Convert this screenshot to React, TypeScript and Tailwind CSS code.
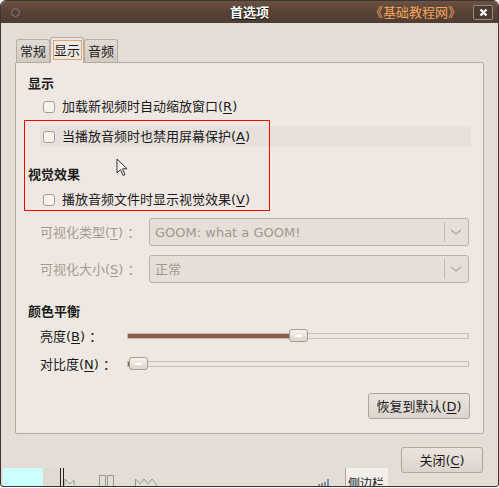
import React from 'react'

const FONT = "font-[family-name:'DejaVu_Sans','Noto_Sans_CJK_SC',sans-serif]"

function Mn({ k }: { k: string }) {
  return (
    <>
      (<span className="underline underline-offset-2">{k}</span>)
    </>
  )
}

function Check({ label, k, hl }: { label: string; k: string; hl?: boolean }) {
  return (
    <div className={`ml-[24px] mr-[12px] flex items-center h-[21px] ${hl ? 'bg-[#e8e1db]' : ''}`}>
      <div className="ml-[3px] w-[12px] h-[12px] rounded-[3px] border border-[#a89d93] bg-[#f7f3ef]"></div>
      <span className="ml-[7px] text-[13px] text-[#1a1a1a] leading-none">
        {label}
        <Mn k={k} />
      </span>
    </div>
  )
}

function Combo({ label, k, value }: { label: string; k: string; value: string }) {
  return (
    <div className="flex items-center h-[28px]">
      <span className="ml-[24px] w-[109px] text-[13px] text-[#a39a91] leading-none whitespace-nowrap">
        {label}
        <Mn k={k} />
        {' ：'}
      </span>
      <div className="w-[320px] h-[28px] rounded-[3px] border border-[#bcb0a4] bg-[#e6dfd8] flex items-center">
        <span className="flex-1 pl-[5px] text-[13px] text-[#a1978e] leading-none">{value}</span>
        <div className="w-px h-[20px] bg-[#c3b8ad]"></div>
        <svg width="22" height="10" viewBox="0 0 22 10" className="mr-[1px]">
          <path d="M6 3 L11 7 L16 3" fill="none" stroke="#b0a59a" strokeWidth="1.2" />
        </svg>
      </div>
    </div>
  )
}

function Slider({ label, k, pos }: { label: string; k: string; pos: number }) {
  return (
    <div className="flex items-center h-[20px]">
      <span className="ml-[24px] w-[87px] text-[13px] text-[#1a1a1a] leading-none whitespace-nowrap">
        {label}
        <Mn k={k} />
        {' ：'}
      </span>
      <div className="relative w-[342px] h-[6px] border border-[#c9beb3] bg-[#ede6df]">
        <div className="h-full bg-[#885e48]" style={{ width: pos }}></div>
        <div
          className="absolute top-[-5px] w-[19px] h-[13px] rounded-[3px] border border-[#a89a8e] bg-gradient-to-b from-[#f6f2ee] to-[#ddd5cd] flex items-center justify-center"
          style={{ left: pos - 2 }}
        >
          <div className="w-[7px] h-[2px] bg-white"></div>
        </div>
      </div>
    </div>
  )
}

export default function App() {
  return (
    <div className={`w-[499px] h-[488px] bg-white overflow-hidden ${FONT}`}>
      <div className="relative w-[499px] h-[487px] rounded-t-[6px] rounded-b-[3px] border border-[#3b3531] bg-[#e4ddd6] flex flex-col overflow-hidden">
        {/* Title bar */}
        <div className="h-[22px] bg-gradient-to-b from-[#6b5244] via-[#574236] to-[#4f3d33] flex items-center relative">
          <div className="ml-[10px] w-[9px] h-[9px] rounded-full border border-[#8a7a70]"></div>
          <div className="absolute left-0 right-0 top-0 h-[22px] flex items-center justify-center">
            <span className="text-[13px] font-bold text-white leading-none [text-shadow:0_1px_1px_#000]">首选项</span>
          </div>
          <span className="ml-auto text-[13px] text-[#f7a55e] leading-none">《基础教程网》</span>
          <div className="ml-[12px] mr-[5px] w-[20px] h-[15px] border border-[#9b887c] rounded-[2px] bg-[#4a3a31] flex items-center justify-center">
            <svg width="9" height="9" viewBox="0 0 9 9">
              <path d="M1.5 1.5 L7.5 7.5 M7.5 1.5 L1.5 7.5" stroke="white" strokeWidth="2.2" />
            </svg>
          </div>
        </div>

        {/* Tabs */}
        <div className="mt-[13px] ml-[15px] flex items-end h-[26px] relative z-10">
          <div className="w-[34px] h-[23px] border border-b-0 border-[#b9ada1] rounded-t-[3px] bg-gradient-to-b from-[#e2dbd4] to-[#d3cac2] flex items-center justify-center text-[13px] leading-none text-[#1a1a1a]">
            常规
          </div>
          <div className="w-[34px] h-[26px] border border-b-0 border-[#b9ada1] rounded-t-[3px] bg-[#efe8e2] flex items-start justify-center pt-[2px] mb-[-1px]">
            <div className="w-[29px] h-[20px] border border-[#e3a46c] flex items-center justify-center text-[13px] leading-none text-[#1a1a1a]">
              显示
            </div>
          </div>
          <div className="w-[34px] h-[23px] border border-b-0 border-[#b9ada1] rounded-t-[3px] bg-gradient-to-b from-[#e2dbd4] to-[#d3cac2] flex items-center justify-center text-[13px] leading-none text-[#1a1a1a]">
            音频
          </div>
        </div>

        {/* Panel */}
        <div className="ml-[14px] w-[469px] h-[372px] border border-[#b5a99d] rounded-[2px] bg-[#efe8e2] flex flex-col">
          <div className="mt-[10px] ml-[12px] h-[20px] flex items-center text-[13px] font-bold leading-none text-[#1a1a1a]">显示</div>
          <div className="mt-[3px]"><Check label="加载新视频时自动缩放窗口" k="R" /></div>
          <div className="mt-[9px]"><Check label="当播放音频时也禁用屏幕保护" k="A" hl /></div>
          <div className="mt-[17px] ml-[12px] h-[20px] flex items-center text-[13px] font-bold leading-none text-[#1a1a1a]">视觉效果</div>
          <div className="mt-[5px]"><Check label="播放音频文件时显示视觉效果" k="V" /></div>
          <div className="mt-[8px]"><Combo label="可视化类型" k="T" value="GOOM: what a GOOM!" /></div>
          <div className="mt-[9px]"><Combo label="可视化大小" k="S" value="正常" /></div>
          <div className="mt-[18px] ml-[12px] h-[20px] flex items-center text-[13px] font-bold leading-none text-[#1a1a1a]">颜色平衡</div>
          <div className="mt-[5px]"><Slider label="亮度" k="B" pos={163} /></div>
          <div className="mt-[8px]"><Slider label="对比度" k="N" pos={3} /></div>
          <div className="mt-[19px] mr-[13px] flex justify-end">
            <button className="w-[102px] h-[26px] rounded-[3px] border border-[#b0a397] bg-gradient-to-b from-[#ebe4de] to-[#dcd4cc] text-[13px] leading-none text-[#1a1a1a]">
              恢复到默认<Mn k="D" />
            </button>
          </div>
        </div>

        {/* Close button */}
        <div className="mt-[13px] mr-[15px] flex justify-end">
          <button className="w-[82px] h-[26px] rounded-[3px] border border-[#b0a397] bg-gradient-to-b from-[#ebe4de] to-[#dcd4cc] text-[13px] leading-none text-[#1a1a1a]">
            关闭<Mn k="C" />
          </button>
        </div>

        {/* Bottom strip (leftover from desktop) */}
        <div className="absolute left-[2px] bottom-0 h-[18px] flex items-end">
          <div className="w-[40px] h-[18px] bg-[#ccfeff]"></div>
          <div className="w-[17px] h-[18px] bg-[#e0dad3]"></div>
          <div className="w-px h-[18px] bg-[#222]"></div>
          <div className="ml-[2px] w-px h-[18px] bg-[#222]"></div>
          <svg width="14" height="10" viewBox="0 0 14 10">
            <path d="M1 9 L1 3 L6 8 L10 4 L10 9" fill="none" stroke="#999" strokeWidth="1" />
          </svg>
          <div className="ml-[21px] w-[7px] h-[11px] border border-[#999] border-b-0"></div>
          <div className="ml-[1px] w-[7px] h-[11px] border border-[#999] border-b-0"></div>
          <svg className="ml-[21px]" width="22" height="8" viewBox="0 0 22 8">
            <path d="M0.5 8 L0.5 1 L5 6 L9 1 L13 6 L17 1 L21 6 L21 8" fill="none" stroke="#999" strokeWidth="1" />
          </svg>
          <svg className="ml-[161px]" width="12" height="7" viewBox="0 0 12 7">
            <rect x="0" y="5" width="2" height="2" fill="#888" />
            <rect x="3" y="4" width="2" height="3" fill="#888" />
            <rect x="6" y="3" width="2" height="4" fill="#888" />
            <rect x="9" y="0" width="2" height="7" fill="#6b93c9" />
          </svg>
          <div className="ml-[15px] w-px h-[18px] bg-[#aaa]"></div>
          <div className="w-[42px] h-[18px] bg-[#f2efeb] overflow-hidden flex items-end">
            <span className="text-[12px] leading-none text-[#222] mb-[-4px] ml-[2px]">侧边栏</span>
          </div>
        </div>

        {/* Red annotation box */}
        <div className="absolute left-[23px] top-[119px] w-[246px] h-[91px] border border-[#ff0000]"></div>

        {/* Mouse cursor */}
        <svg className="absolute left-[115px] top-[157px]" width="13" height="20" viewBox="0 0 13 20">
          <path d="M1 1 L1 15 L4.5 11.5 L7 17.5 L9 16.5 L6.5 10.8 L11 10.8 Z" fill="#f4f4f4" stroke="#333" strokeWidth="1" strokeLinejoin="round" />
        </svg>
      </div>
    </div>
  )
}
